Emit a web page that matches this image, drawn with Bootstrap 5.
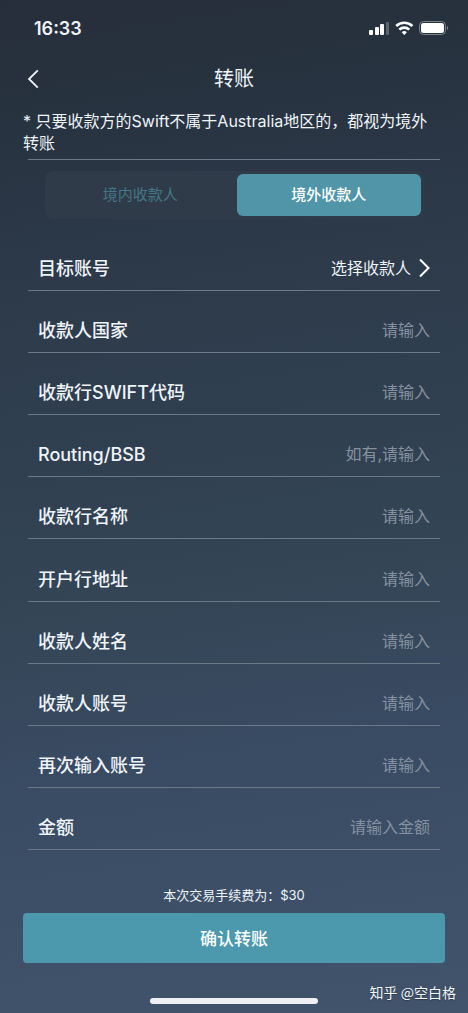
<!DOCTYPE html>
<html lang="zh-CN">
<head>
<meta charset="utf-8">
<meta name="viewport" content="width=device-width, initial-scale=1">
<title>转账</title>
<link href="https://cdn.jsdelivr.net/npm/bootstrap@5.3.0/dist/css/bootstrap.min.css" rel="stylesheet">
<style>
  body {
    font-family: Inter, "Noto Sans CJK SC", sans-serif;
    color: #eef4fa;
    background: linear-gradient(172deg, #272e3b 0%, #27323f 10%, #2d3a4a 27%, #334454 55%, #394b62 72%, #41546c 100%) no-repeat #41546c;
  }
  .status-bar { height: 56px; padding: 0 20px 0 34px; font-size: 18px; }
  .title-bar { height: 46px; }
  .title-bar h1 { font-size: 20px; line-height: 24px; }
  .back-btn { left: 21px; width: 24px; height: 32px; }
  .notice { padding: 8px 36px 5px 23px; font-size: 16px; line-height: 22px; }
  .inset { margin-left: 28px; margin-right: 28px; }
  .rule { border-bottom: 1px solid #6b7988; }
  .switcher { margin: 11px 44px 0 45px; padding: 3px; gap: 4px; border-radius: 8px; background: #303b49; }
  .switcher .btn { height: 42px; font-size: 15px; line-height: 24px; border: 0; border-radius: 6px; color: #427788; }
  .switcher .btn.active { background: #5095a8; color: #fff; font-weight: 500; }
  .fields { margin-top: 10px; }
  .field { min-height: 62px; padding: 0 10px 8px; }
  .field label, .field .caption { font-size: 18px; line-height: 26px; font-weight: 500; white-space: nowrap; }
  .field input { height: 28px; min-width: 0; font-size: 16px; color: #eef4fa; background: transparent; outline: 0; }
  .field input::placeholder { color: #8591a0; opacity: 1; }
  .pick { font-size: 16px; line-height: 28px; color: inherit; }
  .fee { margin-top: 34px; font-size: 13px; line-height: 22px; }
  .confirm { margin: 7px 23px 0; height: 50px; padding: 4px 0 0; border: 0; border-radius: 4px; background: #4c99ae; color: #fff; font-size: 17px; font-weight: 500; }
  .confirm:hover { background: #4c99ae; color: #fff; }
  .home-area { height: 50px; padding-bottom: 9px; }
  .home-bar { width: 168px; height: 6px; border-radius: 3px; background: #eef0f4; }
  .watermark { right: 12px; bottom: 10px; font-family: "Noto Sans CJK SC", sans-serif; font-size: 14px; line-height: 22px; color: #f2f6fa; text-shadow: 0 1px 1px #2d3a4a; }
</style>
</head>
<body>
<div class="d-flex flex-column min-vh-100 position-relative">
  <header>
    <div class="status-bar d-flex align-items-center justify-content-between">
      <span class="fw-semibold">16:33</span>
      <svg width="80" height="16" viewBox="0 0 80 16" aria-hidden="true">
        <g fill="#fff">
          <rect x="1" y="10" width="4" height="5" rx="1"/>
          <rect x="7" y="7" width="4" height="8" rx="1"/>
          <rect x="12" y="4" width="4" height="11" rx="1"/>
          <rect x="18" y="2" width="3" height="13" rx="1" opacity=".25"/>
          <path d="M36.300 15l-2.600-2.800a3.800 3.800 0 0 1 5.200 0z"/>
        </g>
        <g fill="none" stroke="#fff" stroke-width="2.600">
          <path d="M28.200 6a11.600 11.600 0 0 1 16.200 0"/>
          <path d="M31.300 9.600a7.200 7.200 0 0 1 10 0"/>
        </g>
        <rect x="51.500" y="1.500" width="26" height="13" rx="4" fill="none" stroke="#7b838d"/>
        <rect x="53" y="3" width="23" height="10" rx="2.500" fill="#fff"/>
        <path d="M79 6v4q1-.5 1-2t-1-2z" fill="#8b929b"/>
      </svg>
    </div>
    <div class="title-bar d-flex align-items-center justify-content-center position-relative">
      <button type="button" class="back-btn btn p-0 border-0 position-absolute d-flex align-items-center justify-content-center" aria-label="返回">
        <svg width="12" height="20" viewBox="0 0 12 20" fill="none" stroke="#eef4fa" stroke-width="1.800"><path d="M10.800 1.300 2 10l8.800 8.700"/></svg>
      </button>
      <h1 class="m-0 fw-normal">转账</h1>
    </div>
  </header>

  <p class="notice m-0">* 只要收款方的Swift不属于Australia地区的，都视为境外转账</p>
  <div class="inset rule"></div>

  <div class="switcher d-flex" role="group" aria-label="收款人类型">
    <button type="button" class="btn w-50">境内收款人</button>
    <button type="button" class="btn w-50 active" aria-pressed="true">境外收款人</button>
  </div>

  <form class="d-flex flex-column flex-grow-1">
    <div class="fields inset d-flex flex-column flex-grow-1">
      <div class="field rule d-flex flex-fill align-items-end justify-content-between">
        <span class="caption">目标账号</span>
        <button type="button" class="pick btn p-0 border-0 d-flex align-items-center gap-2">选择收款人
          <svg width="11" height="20" viewBox="0 0 11 20" fill="none" stroke="#fff" stroke-width="2"><path d="M1 1.500 9.500 10 1 18.500"/></svg>
        </button>
      </div>
      <div class="field rule d-flex flex-fill align-items-end"><label for="country">收款人国家</label><input id="country" class="flex-grow-1 border-0 p-0 text-end" placeholder="请输入"></div>
      <div class="field rule d-flex flex-fill align-items-end"><label for="swift">收款行SWIFT代码</label><input id="swift" class="flex-grow-1 border-0 p-0 text-end" placeholder="请输入"></div>
      <div class="field rule d-flex flex-fill align-items-end"><label for="bsb">Routing/BSB</label><input id="bsb" class="flex-grow-1 border-0 p-0 text-end" placeholder="如有,请输入"></div>
      <div class="field rule d-flex flex-fill align-items-end"><label for="bank">收款行名称</label><input id="bank" class="flex-grow-1 border-0 p-0 text-end" placeholder="请输入"></div>
      <div class="field rule d-flex flex-fill align-items-end"><label for="address">开户行地址</label><input id="address" class="flex-grow-1 border-0 p-0 text-end" placeholder="请输入"></div>
      <div class="field rule d-flex flex-fill align-items-end"><label for="payee">收款人姓名</label><input id="payee" class="flex-grow-1 border-0 p-0 text-end" placeholder="请输入"></div>
      <div class="field rule d-flex flex-fill align-items-end"><label for="account">收款人账号</label><input id="account" class="flex-grow-1 border-0 p-0 text-end" placeholder="请输入"></div>
      <div class="field rule d-flex flex-fill align-items-end"><label for="again">再次输入账号</label><input id="again" class="flex-grow-1 border-0 p-0 text-end" placeholder="请输入"></div>
      <div class="field rule d-flex flex-fill align-items-end"><label for="amount">金额</label><input id="amount" class="flex-grow-1 border-0 p-0 text-end" inputmode="decimal" placeholder="请输入金额"></div>
    </div>
    <p class="fee mb-0 text-center">本次交易手续费为：$30</p>
    <button type="submit" class="confirm btn">确认转账</button>
  </form>

  <footer class="home-area d-flex align-items-end justify-content-center">
    <div class="home-bar"></div>
    <span class="watermark position-absolute">知乎 @空白格</span>
  </footer>
</div>
<script src="https://cdn.jsdelivr.net/npm/bootstrap@5.3.0/dist/js/bootstrap.bundle.min.js"></script>
</body>
</html>
